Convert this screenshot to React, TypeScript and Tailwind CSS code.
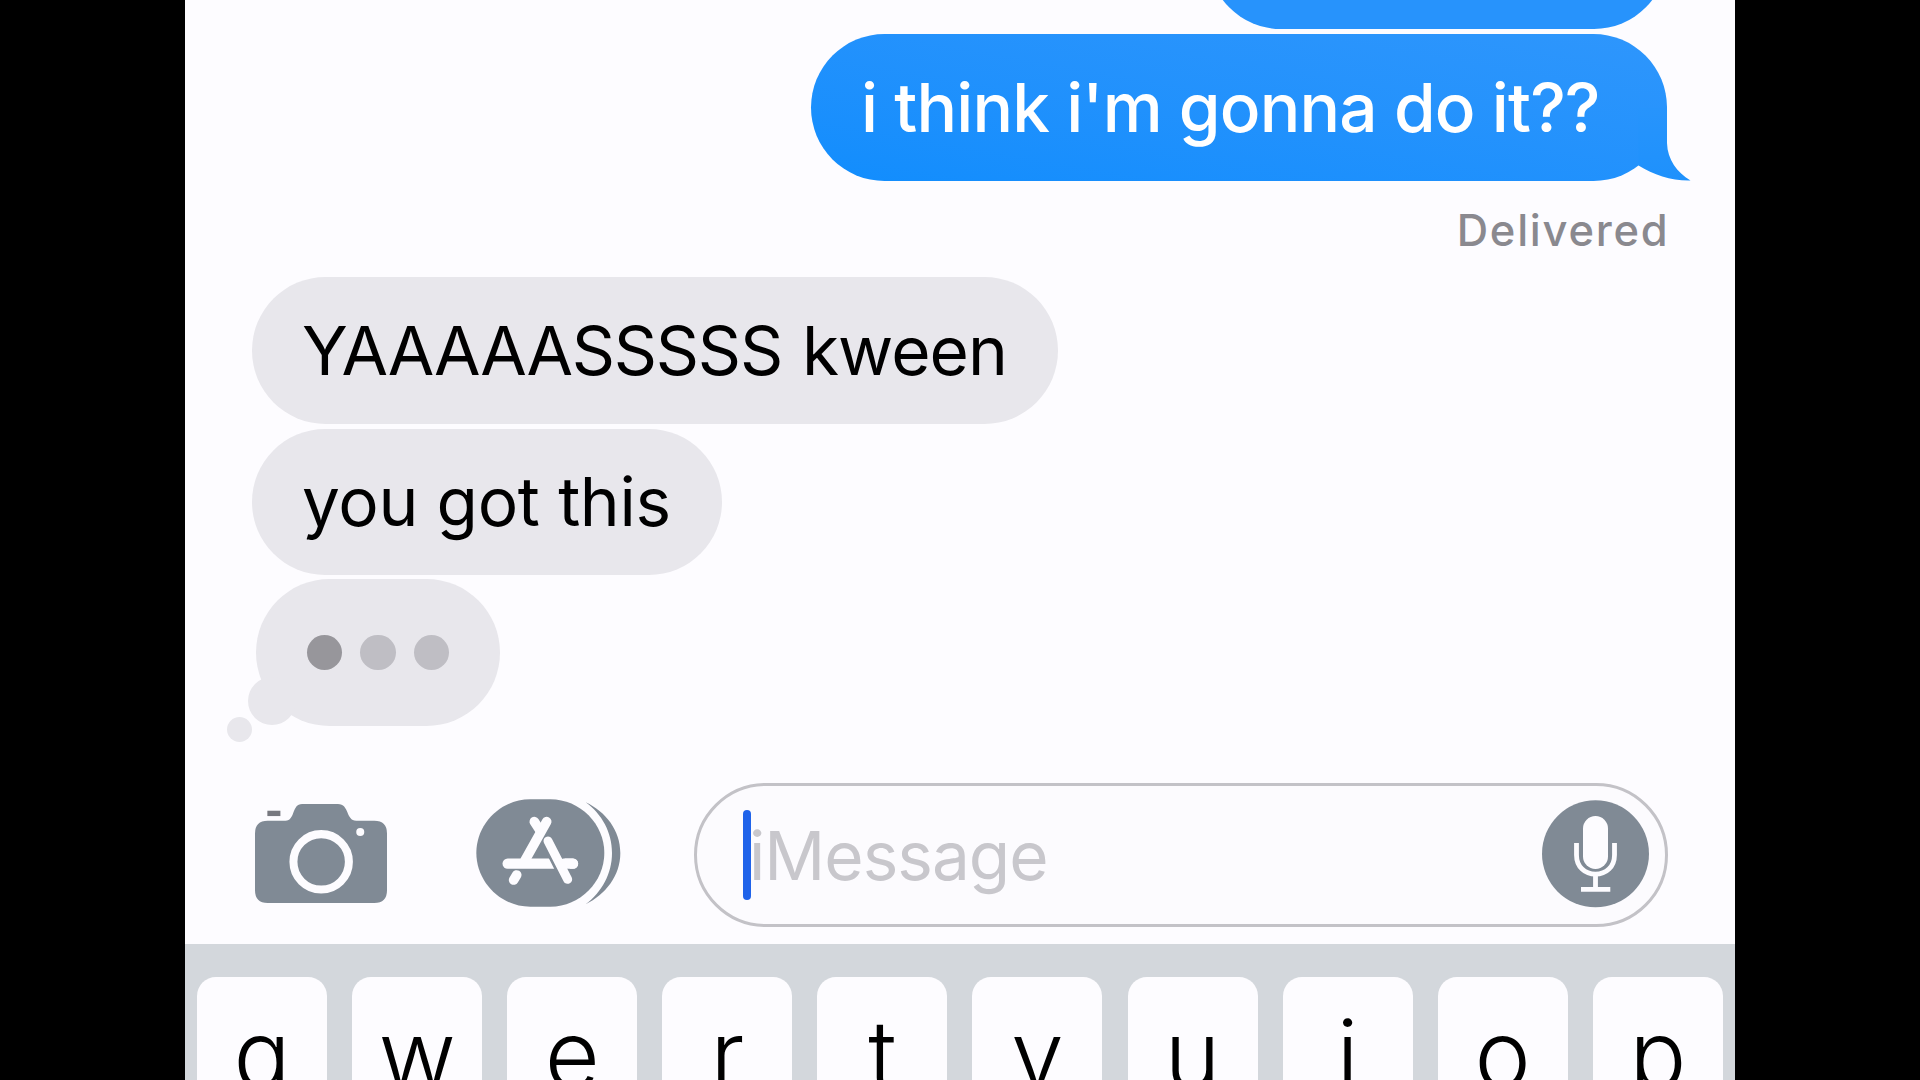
import type { ReactNode } from 'react'

const KEYS = ['q', 'w', 'e', 'r', 't', 'y', 'u', 'i', 'o', 'p']

function Incoming({ size, children }: { size: string, children: ReactNode }) {
  return (
    <div className={`${size} mt-[5px] h-[146.5px] shrink-0 rounded-full bg-[#e8e7ec] pl-[50.5px] flex items-center text-[67.5px] leading-none whitespace-nowrap text-black`}>
      {children}
    </div>
  )
}

function BubbleTail() {
  return (
    <svg className="absolute right-[-25px] bottom-0" width="54" height="86" viewBox="1638 95 54 86">
      <path d="M1638 108H1667V143C1667.500 160 1677 172 1690.500 180.500C1672 181 1654 175 1638.500 165.500Z" fill="url(#tail)" />
      <defs>
        <linearGradient id="tail" x1="0" y1="0" x2="0" y2="1">
          <stop offset="0" stopColor="#2794fc" />
          <stop offset="1" stopColor="#1e91fc" />
        </linearGradient>
      </defs>
    </svg>
  )
}

function Typing() {
  return (
    <div className="relative mt-[3.5px] ml-[4.5px] w-[244px] h-[147px] shrink-0 rounded-full bg-[#e8e7ec] flex items-center justify-center gap-[18px] pr-[0.5px] pt-[1px]">
      <div className="absolute left-[-8px] bottom-[1px] size-[48px] rounded-full bg-[#e8e7ec]" />
      <div className="absolute left-[-29.5px] bottom-[-16.5px] size-[25px] rounded-full bg-[#e8e7ec]" />
      <span className="size-[35.5px] rounded-full bg-[#97969b]" />
      <span className="size-[35.5px] rounded-full bg-[#bfbec4]" />
      <span className="size-[35.5px] rounded-full bg-[#bfbec4]" />
    </div>
  )
}

function CameraIcon() {
  return (
    <svg width="132" height="99" viewBox="77 70 395 296">
      <path d="M115 120H168C198 120 186 70 218 70H325C360 70 348 120 380 120H434Q472 120 472 158V328Q472 366 434 366H115Q77 366 77 328V158Q77 120 115 120Z" fill="#808a95" />
      <rect x="114" y="90" width="39" height="16" fill="#77787f" />
      <circle cx="275" cy="243" r="83" fill="none" stroke="#fdfcff" strokeWidth="24" />
      <circle cx="392" cy="154" r="12" fill="#fdfcff" />
    </svg>
  )
}

function AppsIcon() {
  return (
    <svg width="145" height="108" viewBox="737 56 435 324">
      <path d="M900 57H960C1050 57 1122 132 1122 218S1050 379 960 379H900C810 379 738 304 738 218S810 57 900 57Z" fill="#808a95" />
      <path d="M1066 66C1126 94 1170 150 1170 218S1126 342 1066 372C1115 335 1145 280 1145 218S1115 102 1066 66Z" fill="#808a95" />
      <g fill="none" stroke="#fdfcff" strokeWidth="29" strokeLinecap="round">
        <path d="M832 250H1028" strokeWidth="31" />
        <path d="M912 124L930 152" />
        <path d="M949 124L884 240" />
        <path d="M859 284L850 299" />
        <path d="M960 196L1000 275L1022 318" stroke="#808a95" strokeWidth="42" strokeLinecap="butt" />
        <path d="M953 182L1012 297" strokeWidth="27" />
        <path d="M1000 250H1028" strokeWidth="31" />
      </g>
    </svg>
  )
}

function MicIcon() {
  return (
    <svg width="107" height="108" viewBox="1542 799 107 108">
      <circle cx="1595.500" cy="852.800" r="53.500" fill="#808a95" />
      <rect x="1583" y="815" width="25" height="53" rx="12.500" fill="#fdfcff" />
      <path d="M1576.500 842V854C1576.500 866 1585 873.200 1595.500 873.200S1614.500 866 1614.500 854V842" fill="none" stroke="#fdfcff" strokeWidth="4.800" />
      <path d="M1595.500 874V888M1581 888.300H1610.300" fill="none" stroke="#fdfcff" strokeWidth="4.800" />
    </svg>
  )
}

export default function App() {
  return (
    <div className="w-[1920px] h-[1080px] overflow-hidden bg-black font-[Inter,'Liberation_Sans',sans-serif]">
      <div className="mx-auto w-[1550px] h-[1080px] overflow-hidden bg-[#fdfcff] flex flex-col">
        <div className="h-[783px] shrink-0 pl-[66.5px] pr-[68px] flex flex-col items-start">
          <div className="self-end w-[459px] h-[28.5px] shrink-0 flex items-end overflow-hidden">
            <div className="w-full h-[146px] shrink-0 rounded-full bg-[#2793fc]" />
          </div>
          <div className="relative self-end mt-[5.5px] w-[856px] h-[146.5px] shrink-0 rounded-full bg-linear-to-tr from-[#118dfd] to-[#2e96fc] pl-[50px] flex items-center text-[67.5px] leading-none font-[450] tracking-[-0.85px] whitespace-nowrap text-white">
            <BubbleTail />
            <span className="relative">i think i'm gonna do it??</span>
          </div>
          <div className="self-end -mr-[2.5px] mt-[27.5px] h-[44px] mb-[20px] text-[43.5px] leading-[44px] font-medium tracking-[1.75px] text-[#8a898f]">Delivered</div>
          <Incoming size="w-[806px]">
            <span className="tracking-[-1.3px]">YAAAAASSSSS</span>
            <span className="ml-[20px] tracking-[-0.9px]">kween</span>
          </Incoming>
          <Incoming size="w-[470px]">
            <span className="tracking-[-0.35px]">you got this</span>
          </Incoming>
          <Typing />
        </div>

        <div className="h-[161px] shrink-0 pl-[70px] pr-[67px] flex items-start">
          <div className="pt-[20.5px]"><CameraIcon /></div>
          <div className="pt-[16px] ml-[88.5px]"><AppsIcon /></div>
          <div className="ml-auto w-[974px] h-[144px] rounded-full border-3 border-[#c3c2c7] bg-[#fcfbfe] pl-[46px] pr-[16px] flex items-center">
            <div className="w-[8px] h-[90px] rounded-full bg-[#1f63ea]" />
            <span className="-ml-[2px] pt-[2px] text-[67.5px] leading-none tracking-[-1px] text-[#c8c7cc]">iMessage</span>
            <div className="ml-auto pb-[3px]"><MicIcon /></div>
          </div>
        </div>

        <div className="grow bg-[#d3d7dc] px-[12px] pt-[33px] flex gap-[25.1px]">
          {KEYS.map((k) => (
            <div key={k} className="w-[130px] h-[180px] shrink-0 rounded-[19px] bg-[#fdfcff] text-center text-[95px] leading-[156px] font-light text-black">{k}</div>
          ))}
        </div>
      </div>
    </div>
  )
}
